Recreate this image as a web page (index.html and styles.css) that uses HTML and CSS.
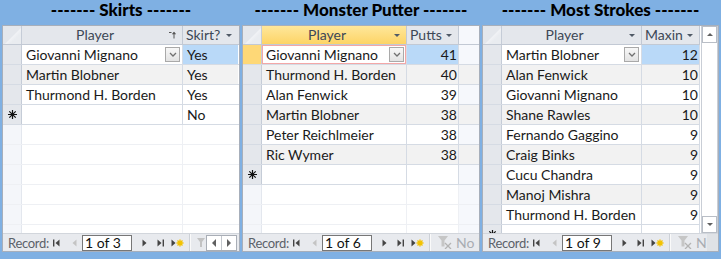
FILE: index.html
```html
<!DOCTYPE html>
<html lang="en">
<head>
  <meta charset="UTF-8" />
  <title>Golf Stats</title>
  <link rel="stylesheet" href="styles.css">
</head>
<body>
  <div class="page">

    <!-- Skirts -->
    <div class="panel skirts">
      <h2 class="title">------- Skirts -------</h2>
      <div class="sheet">
        <div class="body">
          <div class="grid">
            <div class="row head">
              <div class="sel corner"></div>
              <div class="cell c1 hcell">Player
                <svg class="sort-icon" width="7" height="8" viewBox="0 0 7 8"><path d="M0 1.5h2.5M5 1.5v6" stroke="#555" stroke-width="1" fill="none"/><path d="M2.8 3.2L5 0.8l2.2 2.4z" fill="#555"/></svg>
              </div>
              <div class="cell c2 hcell left">Skirt?<span class="dd"></span></div>
            </div>
            <div class="row current">
              <div class="sel"></div>
              <div class="cell c1 combo">Giovanni Mignano<span class="combo-btn"><svg width="8" height="5" viewBox="0 0 8 5"><path d="M1 1l3 3 3-3" stroke="#707070" stroke-width="1.3" fill="none"/></svg></span></div>
              <div class="cell c2 picked">Yes</div>
            </div>
            <div class="row alt">
              <div class="sel"></div>
              <div class="cell c1">Martin Blobner</div>
              <div class="cell c2">Yes</div>
            </div>
            <div class="row">
              <div class="sel"></div>
              <div class="cell c1">Thurmond H. Borden</div>
              <div class="cell c2">Yes</div>
            </div>
            <div class="row newrow">
              <div class="sel"><svg class="star" width="9" height="9" viewBox="0 0 9 9"><path d="M4.5 0v9M0 4.5h9M1.3 1.3l6.4 6.4M7.7 1.3l-6.4 6.4" stroke="#111" stroke-width="1.2"/></svg></div>
              <div class="cell c1"></div>
              <div class="cell c2">No</div>
            </div>
            <div class="row empty"><div class="sel"></div><div class="cell c1"></div><div class="cell c2"></div></div>
            <div class="row empty"><div class="sel"></div><div class="cell c1"></div><div class="cell c2"></div></div>
            <div class="row empty"><div class="sel"></div><div class="cell c1"></div><div class="cell c2"></div></div>
            <div class="row empty"><div class="sel"></div><div class="cell c1"></div><div class="cell c2"></div></div>
            <div class="row empty"><div class="sel"></div><div class="cell c1"></div><div class="cell c2"></div></div>
            <div class="row empty"><div class="sel"></div><div class="cell c1"></div><div class="cell c2"></div></div>
          </div>
        </div>
        <div class="nav">
          <span class="nav-label">Record:</span>
          <svg class="nb first" width="7" height="8" viewBox="0 0 7 8"><rect x="0" y="0.5" width="1.4" height="7" fill="#444"/><path d="M6.5 0.5v7L2.5 4z" fill="#444"/></svg>
          <svg class="nb prev" width="5" height="8" viewBox="0 0 5 8"><path d="M4.5 0.5v7L0.5 4z" fill="#c4c4c4"/></svg>
          <span class="rec-box">1 of 3</span>
          <svg class="nb next" width="5" height="8" viewBox="0 0 5 8"><path d="M0.5 0.5v7L4.5 4z" fill="#444"/></svg>
          <svg class="nb last" width="7" height="8" viewBox="0 0 7 8"><path d="M0.5 0.5v7L4.5 4z" fill="#444"/><rect x="5.6" y="0.5" width="1.4" height="7" fill="#444"/></svg>
          <svg class="nb new" width="13" height="8" viewBox="0 0 13 8"><path d="M0.5 0.5v7L4.5 4z" fill="#444"/><path d="M9 0.5v7M5.5 4h7M6.5 1.5l5 5M11.5 1.5l-5 5" stroke="#f2c200" stroke-width="1.4"/></svg>
          <span class="nav-sep"></span>
          <svg class="funnel half" width="8" height="9" viewBox="0 0 8 9"><path d="M0 0h8L5 4v5H3V4z" fill="#c2c2c2"/></svg>
          <span class="hscroll"><span class="hs-btn"><span class="tri-l"></span></span><span class="hs-btn"><span class="tri-r"></span></span></span>
        </div>
      </div>
    </div>

    <!-- Monster Putter -->
    <div class="panel putter">
      <h2 class="title">------- Monster Putter -------</h2>
      <div class="sheet">
        <div class="body">
          <div class="grid">
            <div class="row head">
              <div class="sel corner"></div>
              <div class="cell c1 hcell hot">Player<span class="dd"></span></div>
              <div class="cell c2 hcell left">Putts<span class="dd"></span></div>
              <div class="cell fill"></div>
            </div>
            <div class="row current">
              <div class="sel hot-sel"></div>
              <div class="cell c1 combo focus">Giovanni Mignano<span class="combo-btn"><svg width="8" height="5" viewBox="0 0 8 5"><path d="M1 1l3 3 3-3" stroke="#707070" stroke-width="1.3" fill="none"/></svg></span></div>
              <div class="cell c2 num picked">41</div>
              <div class="cell fill"></div>
            </div>
            <div class="row alt"><div class="sel"></div><div class="cell c1">Thurmond H. Borden</div><div class="cell c2 num">40</div><div class="cell fill"></div></div>
            <div class="row"><div class="sel"></div><div class="cell c1">Alan Fenwick</div><div class="cell c2 num">39</div><div class="cell fill"></div></div>
            <div class="row alt"><div class="sel"></div><div class="cell c1">Martin Blobner</div><div class="cell c2 num">38</div><div class="cell fill"></div></div>
            <div class="row"><div class="sel"></div><div class="cell c1">Peter Reichlmeier</div><div class="cell c2 num">38</div><div class="cell fill"></div></div>
            <div class="row alt"><div class="sel"></div><div class="cell c1">Ric Wymer</div><div class="cell c2 num">38</div><div class="cell fill"></div></div>
            <div class="row newrow">
              <div class="sel"><svg class="star" width="9" height="9" viewBox="0 0 9 9"><path d="M4.5 0v9M0 4.5h9M1.3 1.3l6.4 6.4M7.7 1.3l-6.4 6.4" stroke="#111" stroke-width="1.2"/></svg></div>
              <div class="cell c1"></div><div class="cell c2"></div><div class="cell fill"></div>
            </div>
            <div class="row empty"><div class="sel"></div><div class="cell c1"></div><div class="cell c2"></div><div class="cell fill"></div></div>
            <div class="row empty"><div class="sel"></div><div class="cell c1"></div><div class="cell c2"></div><div class="cell fill"></div></div>
            <div class="row empty"><div class="sel"></div><div class="cell c1"></div><div class="cell c2"></div><div class="cell fill"></div></div>
          </div>
        </div>
        <div class="nav">
          <span class="nav-label">Record:</span>
          <svg class="nb first" width="7" height="8" viewBox="0 0 7 8"><rect x="0" y="0.5" width="1.4" height="7" fill="#444"/><path d="M6.5 0.5v7L2.5 4z" fill="#444"/></svg>
          <svg class="nb prev" width="5" height="8" viewBox="0 0 5 8"><path d="M4.5 0.5v7L0.5 4z" fill="#c4c4c4"/></svg>
          <span class="rec-box">1 of 6</span>
          <svg class="nb next" width="5" height="8" viewBox="0 0 5 8"><path d="M0.5 0.5v7L4.5 4z" fill="#444"/></svg>
          <svg class="nb last" width="7" height="8" viewBox="0 0 7 8"><path d="M0.5 0.5v7L4.5 4z" fill="#444"/><rect x="5.6" y="0.5" width="1.4" height="7" fill="#444"/></svg>
          <svg class="nb new" width="13" height="8" viewBox="0 0 13 8"><path d="M0.5 0.5v7L4.5 4z" fill="#444"/><path d="M9 0.5v7M5.5 4h7M6.5 1.5l5 5M11.5 1.5l-5 5" stroke="#f2c200" stroke-width="1.4"/></svg>
          <span class="nav-sep"></span>
          <svg class="funnel" width="15" height="13" viewBox="0 0 15 13"><path d="M0 0h10L6.5 4.5v6h-3v-6z" fill="#c6c6c6"/><path d="M7 7l6 6M13 7l-6 6" stroke="#b4b4b4" stroke-width="1.3"/></svg>
          <span class="no-filter">No F</span>
        </div>
      </div>
    </div>

    <!-- Most Strokes -->
    <div class="panel strokes">
      <h2 class="title">------- Most Strokes -------</h2>
      <div class="sheet">
        <div class="body">
          <div class="grid">
            <div class="row head">
              <div class="sel corner"></div>
              <div class="cell c1 hcell">Player<span class="dd"></span></div>
              <div class="cell c2 hcell left">Maxin<span class="dd"></span></div>
            </div>
            <div class="row current">
              <div class="sel"></div>
              <div class="cell c1 combo">Martin Blobner<span class="combo-btn"><svg width="8" height="5" viewBox="0 0 8 5"><path d="M1 1l3 3 3-3" stroke="#707070" stroke-width="1.3" fill="none"/></svg></span></div>
              <div class="cell c2 num picked">12</div>
            </div>
            <div class="row alt"><div class="sel"></div><div class="cell c1">Alan Fenwick</div><div class="cell c2 num">10</div></div>
            <div class="row"><div class="sel"></div><div class="cell c1">Giovanni Mignano</div><div class="cell c2 num">10</div></div>
            <div class="row alt"><div class="sel"></div><div class="cell c1">Shane Rawles</div><div class="cell c2 num">10</div></div>
            <div class="row"><div class="sel"></div><div class="cell c1">Fernando Gaggino</div><div class="cell c2 num">9</div></div>
            <div class="row alt"><div class="sel"></div><div class="cell c1">Craig Binks</div><div class="cell c2 num">9</div></div>
            <div class="row"><div class="sel"></div><div class="cell c1">Cucu Chandra</div><div class="cell c2 num">9</div></div>
            <div class="row alt"><div class="sel"></div><div class="cell c1">Manoj Mishra</div><div class="cell c2 num">9</div></div>
            <div class="row"><div class="sel"></div><div class="cell c1">Thurmond H. Borden</div><div class="cell c2 num">9</div></div>
            <div class="row newrow">
              <div class="sel"><svg class="star" width="9" height="9" viewBox="0 0 9 9"><path d="M4.5 0v9M0 4.5h9M1.3 1.3l6.4 6.4M7.7 1.3l-6.4 6.4" stroke="#111" stroke-width="1.2"/></svg></div>
              <div class="cell c1"></div><div class="cell c2"></div>
            </div>
          </div>
          <div class="vscroll">
            <span class="vs-btn"><span class="tri-u"></span></span>
            <span class="vs-track"></span>
            <span class="vs-btn"><span class="tri-d"></span></span>
          </div>
        </div>
        <div class="nav">
          <span class="nav-label">Record:</span>
          <svg class="nb first" width="7" height="8" viewBox="0 0 7 8"><rect x="0" y="0.5" width="1.4" height="7" fill="#444"/><path d="M6.5 0.5v7L2.5 4z" fill="#444"/></svg>
          <svg class="nb prev" width="5" height="8" viewBox="0 0 5 8"><path d="M4.5 0.5v7L0.5 4z" fill="#c4c4c4"/></svg>
          <span class="rec-box">1 of 9</span>
          <svg class="nb next" width="5" height="8" viewBox="0 0 5 8"><path d="M0.5 0.5v7L4.5 4z" fill="#444"/></svg>
          <svg class="nb last" width="7" height="8" viewBox="0 0 7 8"><path d="M0.5 0.5v7L4.5 4z" fill="#444"/><rect x="5.6" y="0.5" width="1.4" height="7" fill="#444"/></svg>
          <svg class="nb new" width="13" height="8" viewBox="0 0 13 8"><path d="M0.5 0.5v7L4.5 4z" fill="#444"/><path d="M9 0.5v7M5.5 4h7M6.5 1.5l5 5M11.5 1.5l-5 5" stroke="#f2c200" stroke-width="1.4"/></svg>
          <span class="nav-sep"></span>
          <svg class="funnel" width="15" height="13" viewBox="0 0 15 13"><path d="M0 0h10L6.5 4.5v6h-3v-6z" fill="#c6c6c6"/><path d="M7 7l6 6M13 7l-6 6" stroke="#b4b4b4" stroke-width="1.3"/></svg>
          <span class="no-filter">N</span>
          <span class="nav-corner"></span>
        </div>
      </div>
    </div>

  </div>
</body>
</html>
```

FILE: styles.css
```css
body {
  margin: 0;
  background: #7fb0e3;
  font-family: Lato, "Liberation Sans", sans-serif;
  overflow: hidden;
}

.page {
  display: flex;
  gap: 2px;
  padding-left: 2px;
}

.panel {
  width: 238px;
  flex: none;
}

.panel.strokes {
  width: 237px;
}

.title {
  margin: 0;
  height: 25px;
  font-size: 17px;
  font-weight: 900;
  line-height: 20px;
  text-align: center;
  color: #000;
  white-space: nowrap;
}

.sheet {
  height: 227px;
  box-sizing: border-box;
  border: 1px solid #a7afbb;
  background: #fff;
  display: flex;
  flex-direction: column;
  overflow: hidden;
}

.body {
  height: 207px;
  display: flex;
  overflow: hidden;
}

.grid {
  flex: 1;
  overflow: hidden;
}

/* rows and cells */
.row {
  display: flex;
  height: 20px;
  box-sizing: border-box;
  border-bottom: 1px solid #d5dbe4;
}

.row.head {
  height: 19px;
  background: #e4e7ec;
  border-bottom-color: #c2c9d4;
}

.row.alt .cell {
  background: #f2f2f2;
}

.row.empty {
  border-bottom-color: #eef0f4;
}

.sel {
  width: 19px;
  flex: none;
  box-sizing: border-box;
  border-right: 1px solid #c5ccd7;
  background: #e4e7ec;
  display: flex;
  align-items: center;
  justify-content: center;
}

.row.empty .sel {
  background: #f4f6fa;
  border-right-color: #e3e7ee;
}

.sel.corner {
  background: linear-gradient(135deg, #e4e7ec 55%, #f1f3f6 56%, #e9ecf0 70%);
}

.sel.hot-sel {
  background: #fed877;
}

.star {
  display: block;
}

.cell {
  flex: none;
  box-sizing: border-box;
  border-right: 1px solid #d5dbe4;
  padding: 0 4px;
  font-size: 14px;
  line-height: 19px;
  color: #1a1a1a;
  white-space: nowrap;
  overflow: hidden;
  position: relative;
}

.row.empty .cell {
  border-right-color: #eef0f4;
}

.cell.num {
  text-align: right;
  padding-right: 1px;
}

.cell.picked {
  background: #b9d9f8;
}

.cell.fill {
  flex: 1;
  background: #f6f8fc;
  border-right: none;
}

.hcell {
  text-align: center;
  padding-right: 18px;
  color: #3d4756;
  line-height: 18px;
  border-right-color: #c2c9d4;
}

.hcell.left {
  text-align: left;
  padding-left: 3px;
  padding-right: 0;
}

.hcell.hot {
  background: linear-gradient(#fee79b, #fdd466);
}

.dd {
  position: absolute;
  right: 6px;
  top: 8px;
  width: 0;
  height: 0;
  border-left: 3px solid transparent;
  border-right: 3px solid transparent;
  border-top: 3px solid #505a66;
}

.sort-icon {
  position: absolute;
  right: 6px;
  top: 5px;
}

/* current record combo */
.combo-btn {
  position: absolute;
  right: 2px;
  top: 2px;
  width: 15px;
  height: 15px;
  box-sizing: border-box;
  border: 1px solid #a9a9a9;
  background: linear-gradient(#f7f7f7, #e3e3e3);
  display: flex;
  align-items: center;
  justify-content: center;
}

.cell.focus {
  box-shadow: inset 0 0 0 1px #f3a7a7;
}

/* column widths */
.skirts .c1 { width: 161px; }
.skirts .c2 { width: 55px; border-right: none; }
.putter .c1 { width: 145px; }
.putter .c2 { width: 52px; }
.strokes .c1 { width: 140px; }
.strokes .c2 { width: 58px; }

/* vertical scrollbar */
.vscroll {
  width: 17px;
  flex: none;
  margin-left: 1px;
  display: flex;
  flex-direction: column;
  background: #fff;
  box-sizing: border-box;
  border-left: 1px solid #c9ced6;
  border-right: 1px solid #c9ced6;
}

.vs-btn {
  height: 17px;
  flex: none;
  box-sizing: border-box;
  border: 1px solid #b9bec6;
  background: #fff;
  display: flex;
  align-items: center;
  justify-content: center;
}

.vs-track {
  flex: 1;
}

.tri-u,
.tri-d,
.tri-l,
.tri-r {
  width: 0;
  height: 0;
}

.tri-u {
  border-left: 3px solid transparent;
  border-right: 3px solid transparent;
  border-bottom: 3px solid #606060;
}

.tri-d {
  border-left: 3px solid transparent;
  border-right: 3px solid transparent;
  border-top: 3px solid #606060;
}

.tri-l {
  border-top: 4px solid transparent;
  border-bottom: 4px solid transparent;
  border-right: 4px solid #606060;
}

.tri-r {
  border-top: 4px solid transparent;
  border-bottom: 4px solid transparent;
  border-left: 4px solid #606060;
}

/* record navigation */
.nav {
  height: 18px;
  flex: none;
  box-sizing: border-box;
  border-top: 1px solid #d2d6dc;
  background: #e8eaee;
  display: flex;
  align-items: center;
  white-space: nowrap;
  overflow: hidden;
}

.nav-label {
  width: 50px;
  flex: none;
  padding-left: 5px;
  box-sizing: border-box;
  font-size: 13px;
  letter-spacing: -0.3px;
  color: #5b6169;
}

.nb {
  flex: none;
  display: block;
}

.nb.prev { margin-left: 12px; }
.nb.next { margin-left: 10px; }
.nb.last { margin-left: 10px; }
.nb.new { margin-left: 7px; }

.rec-box {
  width: 50px;
  height: 16px;
  flex: none;
  margin-left: 5px;
  box-sizing: border-box;
  border: 1px solid #777;
  background: #fff;
  font-size: 14px;
  line-height: 14px;
  padding-left: 2px;
  color: #111;
}

.nav-sep {
  width: 1px;
  height: 17px;
  flex: none;
  margin-left: 5px;
  background: #fafafa;
  border-left: 1px solid #cdd1d7;
}

.funnel {
  flex: none;
  margin-left: 7px;
  display: block;
}

.funnel.half {
  margin-left: 6px;
}

.hscroll {
  display: flex;
  flex: none;
  margin-left: 1px;
  height: 16px;
  box-sizing: border-box;
  border: 1px solid #a9aeb6;
  background: #fff;
}

.hs-btn {
  width: 14px;
  display: flex;
  align-items: center;
  justify-content: center;
  border-right: 1px solid #c3c7cd;
}

.hs-btn:last-child {
  border-right: none;
}

.no-filter {
  margin-left: 3px;
  font-size: 14px;
  color: #a9adb3;
  flex: none;
}

.nav-corner {
  margin-left: auto;
  width: 16px;
  height: 18px;
  flex: none;
  background: #dfe2e6;
}
```
